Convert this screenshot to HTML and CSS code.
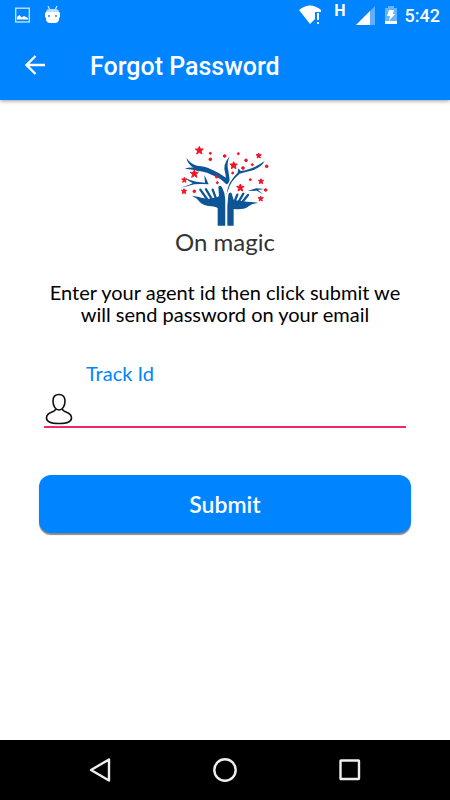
FILE: index.html
```html
<!DOCTYPE html>
<html lang="en">
<head>
    <meta charset="UTF-8">
    <meta name="viewport" content="width=device-width, initial-scale=1.0">
    <title>Forgot Password</title>
    <link rel="stylesheet" href="styles.css">
</head>
<body>

    <header class="app-header">
        <div class="status-bar">
            <div class="status-left">
                <svg width="15" height="16" viewBox="0 0 15 16">
                    <rect x="0.7" y="1.2" width="13.6" height="13.8" fill="none" stroke="#fff" stroke-opacity="0.8" stroke-width="1.3"/>
                    <path d="M2 12.500V10l2.500-2 2 2.500L9 9l4 2v1.500z" fill="#fff"/>
                </svg>
                <svg width="15" height="18" viewBox="0 0 15 18">
                    <path d="M3 0l2 4M12 0l-2 4" stroke="#fff" stroke-opacity="0.8" stroke-width="1.2"/>
                    <path d="M1 6q0-3 4-3h5q4 0 4 3z" fill="#b8ddff"/>
                    <path d="M0 7l1-1h13l1 1v4l-1 1v2q-1 3-4 3H5q-3 0-4-3v-2l-1-1z" fill="#fff"/>
                    <path d="M3 9h2v2H3zM10 9h2v2h-2z" fill="#4ba8ff"/>
                </svg>
            </div>
            <div class="status-right">
                <svg class="wifi" width="22" height="20" viewBox="0 0 22 20">
                    <path d="M0 5Q11-4 22 5v2h-6v7l-5 5z" fill="#fff"/>
                    <path d="M19 8v7M19 17v2" stroke="#fff" stroke-width="2"/>
                </svg>
                <span class="network">H</span>
                <svg class="signal" width="19" height="19" viewBox="0 0 19 19">
                    <path d="M19 0v19H0z" fill="#5eb0ff"/>
                    <path d="M14 5v14H0z" fill="#fff"/>
                </svg>
                <svg class="battery" width="12" height="18" viewBox="0 0 12 18">
                    <path d="M0 2h3V0h6v2h3v16H0z" fill="#66b5ff"/>
                    <path d="M0 15h12v3H0z" fill="#fff"/>
                    <path d="M4 4h5L8 8h2l-6 7 1-5H2z" fill="#fff"/>
                </svg>
                <span class="clock">5:42</span>
            </div>
        </div>
        <div class="toolbar">
            <button type="button" class="back" aria-label="Back">
                <svg width="22" height="22" viewBox="0 0 22 22" fill="none" stroke="#fff" stroke-width="2.400">
                    <path d="M21 11H3M11.500 2l-9 9 9 9"/>
                </svg>
            </button>
            <h1>Forgot Password</h1>
        </div>
    </header>

    <main class="container">
        <div class="logo">
            <svg width="90" height="80" viewBox="45 20 270 240">
                <g fill="#0d5596">
                    <!-- branches -->
                    <path d="M64 55q12 18 32 24 27 2 45 12 20 8 42 24l-2-12q-10-27 13-52-10 24-4 43l4 27q-3 12-10 14-18-20-45-29-22-11-42-11-10-5-38-7 12-4 26-3Q68 74 64 55z"/>
                    <path d="M185 163q4-36 33-63l2-13 7 8q29-4 46-14 14-8 26-16-11 21-41 29-20 5-34 9-29 24-34 49l-5 14z"/>
                    <path d="M47 145q24-7 36-14-12-3-21-14 16 8 32 10l26 3-2-23q6 11 13 28-22-2-43 0-17 5-41 10z"/>
                    <path d="M248 155l25-8 26 2-20 3 16 13-20-11z"/>
                    <!-- palms and arms -->
                    <path d="M81 171q15-2 28 4l20 4 29-6 4-3-2-28q6-6 11 2 9 16 10 37v78h-23v-52q-4-5-20-6-25-2-36-15-6-10-21-15z"/>
                    <path d="M187 259v-59l3-34q4-10 10-4l6 20 40 5q16 0 34 4-18 2-28 9-14 13-46 9v50z"/>
                </g>
                <!-- fingers -->
                <g fill="none" stroke="#0d5596" stroke-width="7" stroke-linecap="round">
                    <path d="M106 151l24 34M123 150l18 30M143 151l11 30"/>
                    <path d="M217 166l-9 22M235 163l-16 28M249 167l-20 25"/>
                </g>
                <path d="M184 258V181q0-14 9-31" fill="none" stroke="#fff" stroke-width="4"/>
                <g fill="#f01428" stroke="#f01428" stroke-width="3" stroke-linejoin="round">
                    <!-- stars -->
                    <path d="M103 21l3 8h9l-7 6 3 9-8-5-8 5 3-9-7-6h9z"/>
                    <path d="M88 91l3 8h9l-7 6 3 9-8-5-8 5 3-9-7-6h9z"/>
                    <path d="M206 67l3 7h8l-6 6 2 8-7-4-7 4 2-8-6-6h8z"/>
                    <path d="M226 134l3 7h8l-6 6 2 8-7-4-7 4 2-8-6-6h8z"/>
                    <path d="M58 114l2 5h6l-5 4 2 6-5-3-5 3 2-6-5-4h6z"/>
                    <path d="M57 148l2 5h6l-5 4 2 6-5-3-5 3 2-6-5-4h6z"/>
                    <path d="M281 41l2 5h6l-5 4 2 6-5-3-5 3 2-6-5-4h6z"/>
                    <path d="M288 118l2 5h6l-5 4 2 6-5-3-5 3 2-6-5-4h6z"/>
                    <path d="M287 170l2 5h6l-5 4 2 6-5-3-5 3 2-6-5-4h6z"/>
                    <circle cx="136" cy="42" r="3"/>
                    <circle cx="136" cy="60" r="4"/>
                    <circle cx="179" cy="50" r="4"/>
                    <circle cx="220" cy="43" r="3"/>
                    <circle cx="243" cy="63" r="4"/>
                    <circle cx="234" cy="86" r="4"/>
                    <circle cx="262" cy="76" r="3"/>
                    <circle cx="305" cy="81" r="4"/>
                    <circle cx="203" cy="101" r="3"/>
                    <circle cx="256" cy="121" r="3"/>
                    <circle cx="302" cy="152" r="4"/>
                    <circle cx="155" cy="112" r="4"/>
                    <circle cx="157" cy="130" r="3"/>
                    <circle cx="88" cy="156" r="4"/>
                </g>
            </svg>
            <span class="logo-name">On magic</span>
        </div>

        <p>Enter your agent id then click submit we will send password on your email</p>

        <form id="forgotForm">
            <label for="track_id">Track Id</label>
            <div class="field">
                <svg width="28" height="32" viewBox="0 0 28 32" fill="none" stroke="#111" stroke-width="1.600">
                    <path d="M14 1.500C10 1.500 8 4 8 8c0 5 2.500 9 6 9s6-4 6-9c0-4-2-6.500-6-6.500z"/>
                    <path d="M10.500 16c0 4-9 2-9 9 0 4 5 5.500 12.500 5.500S26.500 29 26.500 25c0-7-9-5-9-9"/>
                </svg>
                <input type="text" id="track_id" name="track_id">
            </div>
            <button type="submit" class="submit">Submit</button>
        </form>
    </main>

    <nav class="nav-bar">
        <button type="button" aria-label="Back">
            <svg width="24" height="24" viewBox="0 0 24 24"><path d="M21 1.500v21L3 12z"/></svg>
        </button>
        <button type="button" aria-label="Home">
            <svg width="24" height="24" viewBox="0 0 24 24"><circle cx="12" cy="12" r="10.700"/></svg>
        </button>
        <button type="button" aria-label="Recent apps">
            <svg width="24" height="24" viewBox="0 0 24 24"><rect x="2.500" y="2.500" width="18.500" height="18.500" rx="0.500"/></svg>
        </button>
    </nav>

</body>
</html>
```
FILE: styles.css
```css
* {
    box-sizing: border-box;
}

body {
    font-family: Lato, sans-serif;
    background-color: #ffffff;
    color: #111;
    margin: 0;
    min-height: 100vh;
    display: flex;
    flex-direction: column;
}

svg {
    display: block;
}

button {
    padding: 0;
    border: none;
    background: none;
    cursor: pointer;
}

.app-header {
    background-color: #0084ff;
    color: white;
    font-family: Roboto, sans-serif;
    font-weight: 500;
    box-shadow: 0 1px 4px rgba(0, 0, 0, 0.4);
}

.status-bar {
    height: 30px;
    padding: 0 10px 0 15px;
    display: flex;
    justify-content: space-between;
    align-items: center;
}

.status-left,
.status-right {
    display: flex;
    align-items: center;
}

.status-left {
    gap: 15px;
}

.network {
    margin: 0 10px 8px 13px;
    font-size: 16px;
    line-height: 16px;
    font-weight: 700;
}

.battery {
    margin: 0 8px 0 10px;
}

.clock {
    font-size: 18px;
    line-height: 30px;
    padding-top: 2px;
}

.toolbar {
    height: 70px;
    padding: 0 24px;
    display: flex;
    align-items: center;
    gap: 44px;
}

h1 {
    margin: 0;
    padding-top: 4px;
    font-size: 25px;
    line-height: 30px;
    font-weight: 500;
}

.container {
    flex: 1;
    padding: 46px 39px 40px;
}

.logo {
    display: flex;
    flex-direction: column;
    align-items: center;
}

.logo-name {
    font-size: 24px;
    line-height: 32px;
    color: #333;
}

p {
    margin: 23px 0 0;
    padding: 0 8px;
    text-align: center;
    font-size: 20px;
    line-height: 22px;
    color: #000;
}

form {
    margin-top: 36px;
    display: flex;
    flex-direction: column;
}

label {
    margin-left: 47px;
    font-size: 20px;
    line-height: 24px;
    color: #0084ff;
}

.field {
    margin: 7px 5px 0;
    padding: 0 1px;
    height: 36px;
    display: flex;
    align-items: center;
    gap: 14px;
    border-bottom: 2px solid #f0266f;
}

.field input {
    flex: 1;
    min-width: 0;
    height: 32px;
    padding: 0;
    border: none;
    outline: none;
    background: none;
    font-family: inherit;
    font-size: 20px;
}

.submit {
    margin-top: 47px;
    height: 58px;
    border-radius: 12px;
    background-color: #0084ff;
    box-shadow: 0 2px 1px #888;
    color: white;
    font-family: inherit;
    font-size: 23px;
    font-weight: 600;
}

.nav-bar {
    height: 60px;
    background-color: #000;
    display: flex;
    justify-content: center;
    align-items: center;
    gap: 101px;
}

.nav-bar svg {
    fill: none;
    stroke: #eee;
    stroke-width: 2.4;
    stroke-linejoin: round;
}
```
